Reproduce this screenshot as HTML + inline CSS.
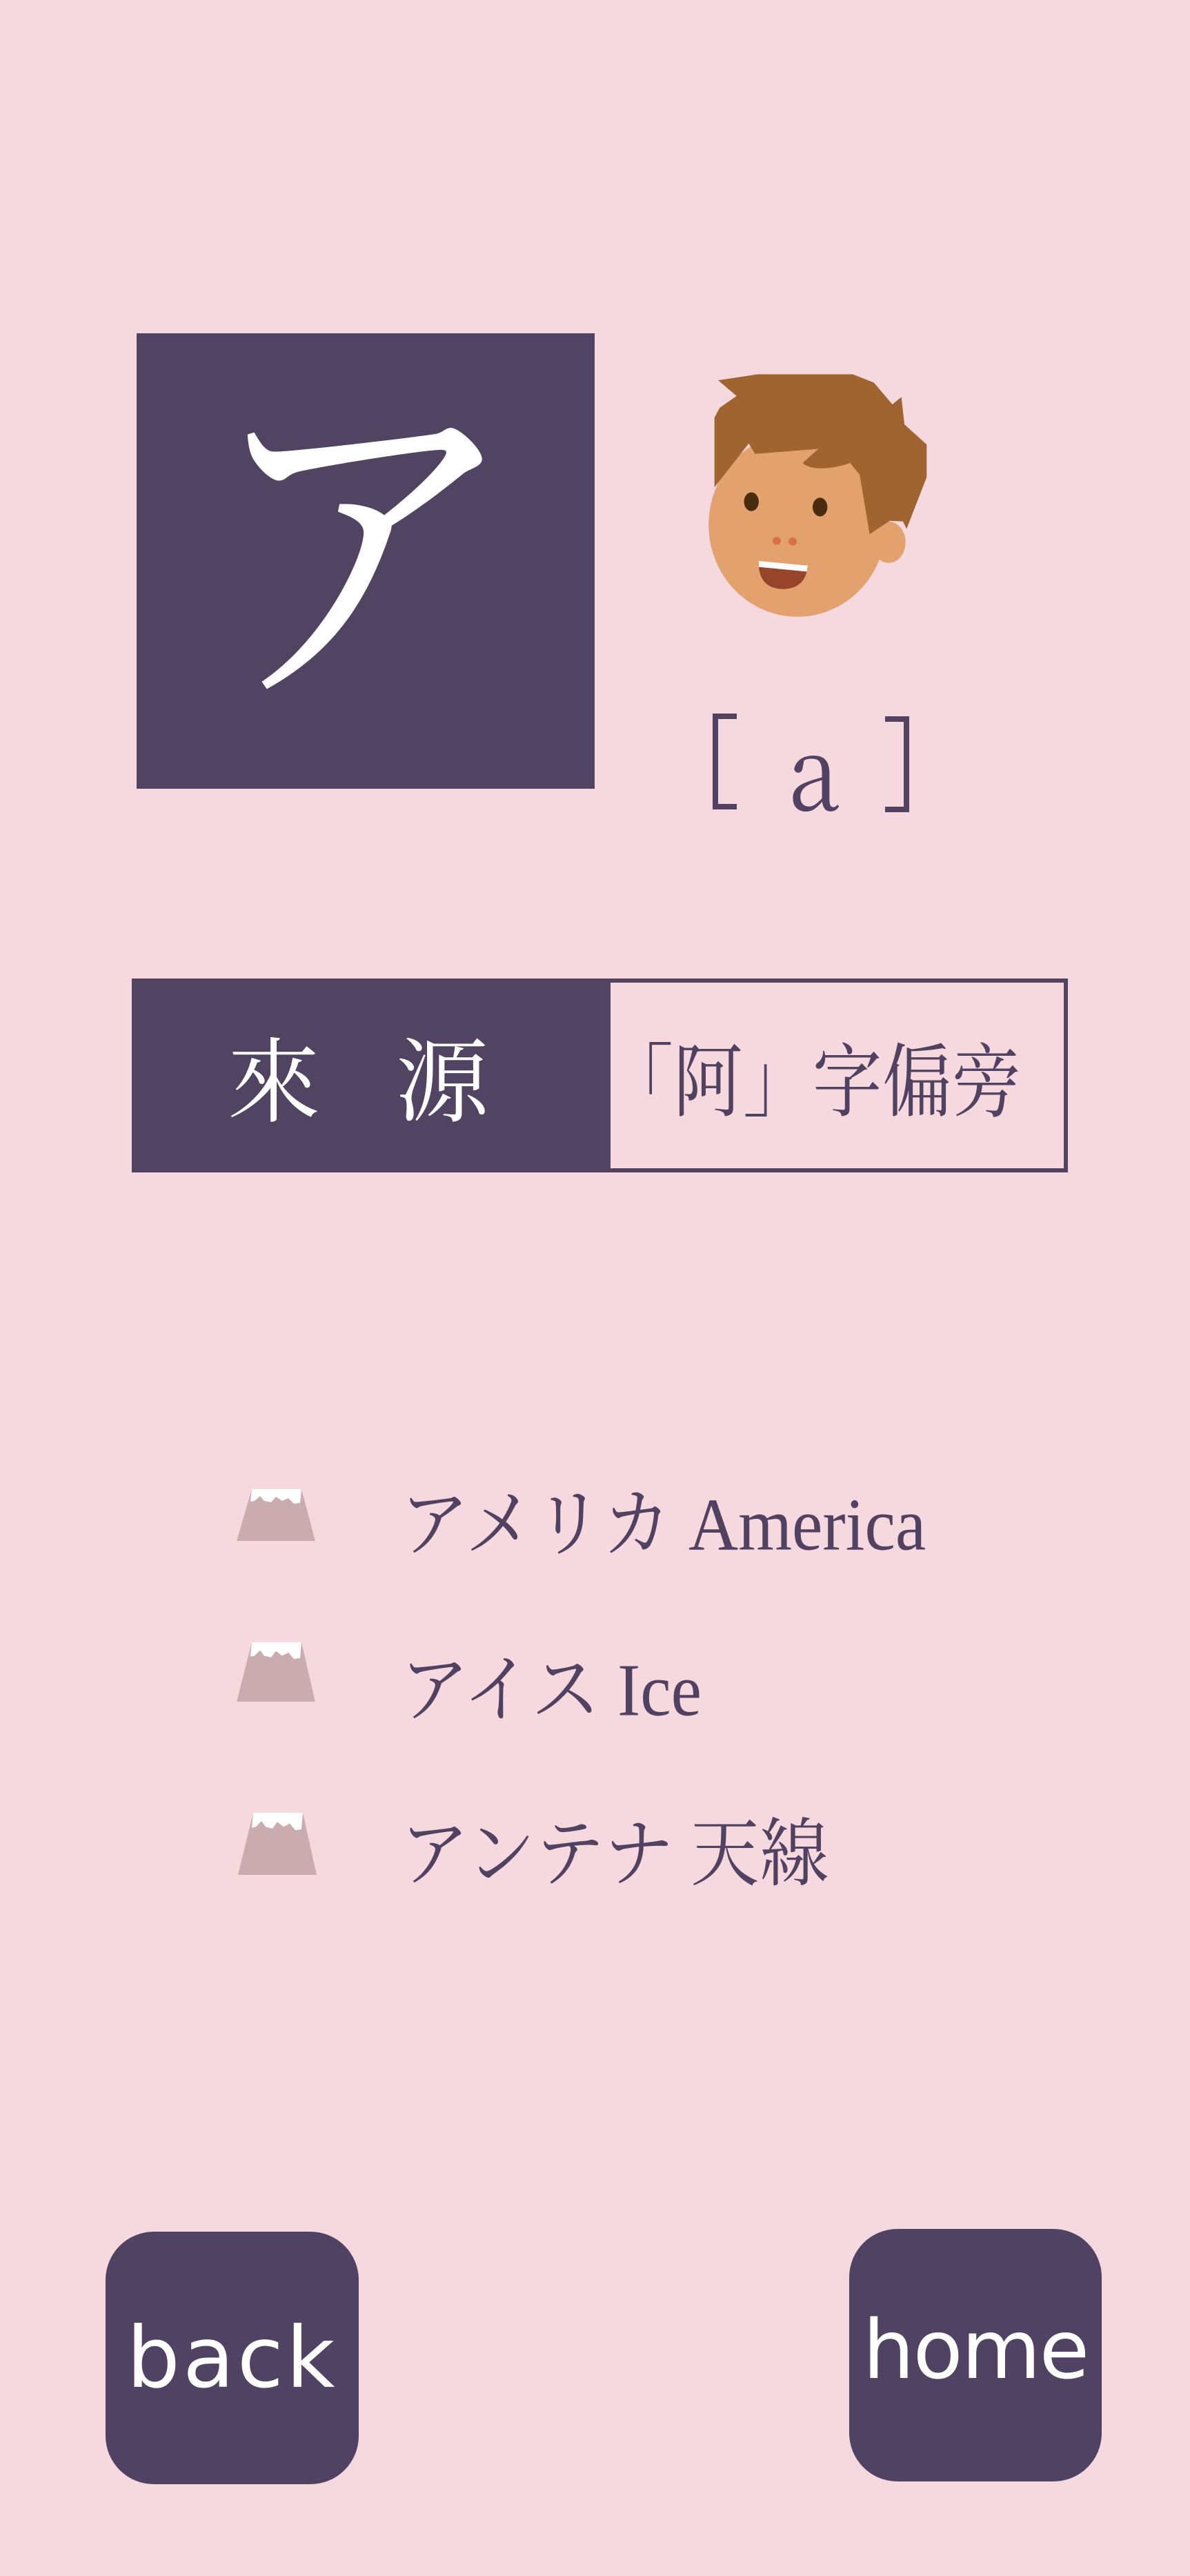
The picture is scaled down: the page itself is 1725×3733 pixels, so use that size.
<!DOCTYPE html>
<html><head><meta charset="utf-8"><style>
html,body{margin:0;padding:0}
body{width:1725px;height:3733px;background:#f6d9de;position:relative;overflow:hidden;font-family:"Liberation Serif","Noto Serif CJK JP",serif}
.abs{position:absolute}
.dark{background:#514463}
.t{color:#524262;font-family:"Liberation Serif","Noto Serif CJK JP",serif;font-size:100px;line-height:1;white-space:nowrap;transform-origin:0 50%;transform:scaleY(1.08)}
.btn{position:absolute;background:#504262;border-radius:70px;color:#fff;font-family:"DejaVu Sans","Liberation Sans",sans-serif;font-size:122px;text-align:center}
</style></head><body>

<div class="abs dark" style="left:198px;top:483px;width:664px;height:660px"></div>
<div class="abs" style="left:198px;top:430px;width:650px;height:660px;color:#fff;font-family:'Noto Serif CJK JP',serif;font-size:460px;line-height:660px;text-align:center;transform:scaleY(1.1)">ア</div>

<svg class="abs" style="left:180px;top:460px" width="1200" height="760" viewBox="0 0 1568 1568" preserveAspectRatio="none">
 <ellipse cx="1275" cy="620" rx="168" ry="275" fill="#e3a26d"/>
 <ellipse cx="1448" cy="672" rx="32" ry="62" fill="#e3a26d"/>
 <path d="M1125,188 L1200,170 L1380,170 L1420,195 L1455,260 L1472,238 L1478,320 L1520,380 L1520,478 L1482,632 L1475,610 L1450,608 L1412,648 L1393,470 L1375,435 C1340,455 1300,458 1285,435 L1315,393 L1195,408 L1183,377 L1118,508 L1118,300 L1128,270 L1160,235 Z" fill="#a06431"/>
 <ellipse cx="1188" cy="551" rx="14" ry="28" fill="#4a2c0e"/>
 <ellipse cx="1318" cy="567" rx="14" ry="28" fill="#4a2c0e"/>
 <ellipse cx="1236" cy="668" rx="8" ry="12" fill="#d9704a"/>
 <ellipse cx="1266" cy="670" rx="8" ry="12" fill="#d9704a"/>
 <path d="M1202,728 L1295,742 C1292,790 1275,812 1248,812 C1222,812 1200,790 1202,728 Z" fill="#96442a"/>
 <path d="M1202,728 L1295,742 L1293,760 L1202,746 Z" fill="#fff"/>
</svg>

<div class="abs" style="left:1033px;top:1034px;width:27px;height:123px;border:8px solid #524262;border-right:none"></div>
<div class="abs" style="left:1283px;top:1038px;width:27px;height:123px;border:8px solid #524262;border-left:none"></div>
<div class="abs" style="left:1135px;top:1045px;width:90px;text-align:center;color:#524262;font-family:'Noto Serif CJK JP',serif;font-size:135px;line-height:130px;transform:scaleY(1.1)">a</div>

<div class="abs" style="left:191px;top:1418px;width:1345px;height:269px;border:6px solid #514463;background:#f6d9de"></div>
<div class="abs dark" style="left:191px;top:1418px;width:694px;height:281px"></div>
<div class="abs" style="left:330px;top:1485px;color:#fff;font-family:'Noto Serif CJK JP',serif;font-size:134px;line-height:1.1;white-space:nowrap">來<span style="display:inline-block;width:110px"></span>源</div>
<div class="abs" style="left:875px;top:1495px;color:#524262;font-family:'Noto Serif CJK TC','Noto Serif CJK JP',serif;font-size:116px;line-height:1.1;white-space:nowrap;transform-origin:0 0;transform:scaleX(0.87)">「阿」字偏旁</div>

<svg class="abs" style="left:343px;top:2158px" width="114" height="75" viewBox="0 0 114 75"><path d="M22,0 L94,0 L114,75 L0,75 Z" fill="#c9abb0"/><path d="M22,0 L94,0 L92,20 L83,21 L75,13 L66,17 L57,11 L50,19 L40,17 L34,10 L26,17 L20,18 Z" fill="#fff"/></svg>
<svg class="abs" style="left:343px;top:2380px" width="114" height="86" viewBox="0 0 114 75" preserveAspectRatio="none"><path d="M22,0 L94,0 L114,75 L0,75 Z" fill="#c9abb0"/><path d="M22,0 L94,0 L92,20 L83,21 L75,13 L66,17 L57,11 L50,19 L40,17 L34,10 L26,17 L20,18 Z" fill="#fff"/></svg>
<svg class="abs" style="left:345px;top:2627px" width="114" height="90" viewBox="0 0 114 75" preserveAspectRatio="none"><path d="M22,0 L94,0 L114,75 L0,75 Z" fill="#c9abb0"/><path d="M22,0 L94,0 L92,20 L83,21 L75,13 L66,17 L57,11 L50,19 L40,17 L34,10 L26,17 L20,18 Z" fill="#fff"/></svg>

<div class="abs t" style="left:580px;top:2160px">アメリカ America</div>
<div class="abs t" style="left:580px;top:2400px">アイス Ice</div>
<div class="abs t" style="left:580px;top:2638px">アンテナ 天線</div>

<div class="btn" style="left:153px;top:3234px;width:367px;height:366px;line-height:366px;letter-spacing:4px">back</div>
<div class="btn" style="left:1231px;top:3230px;width:366px;height:366px;line-height:350px;font-size:118px;letter-spacing:-2px">home</div>

</body></html>
